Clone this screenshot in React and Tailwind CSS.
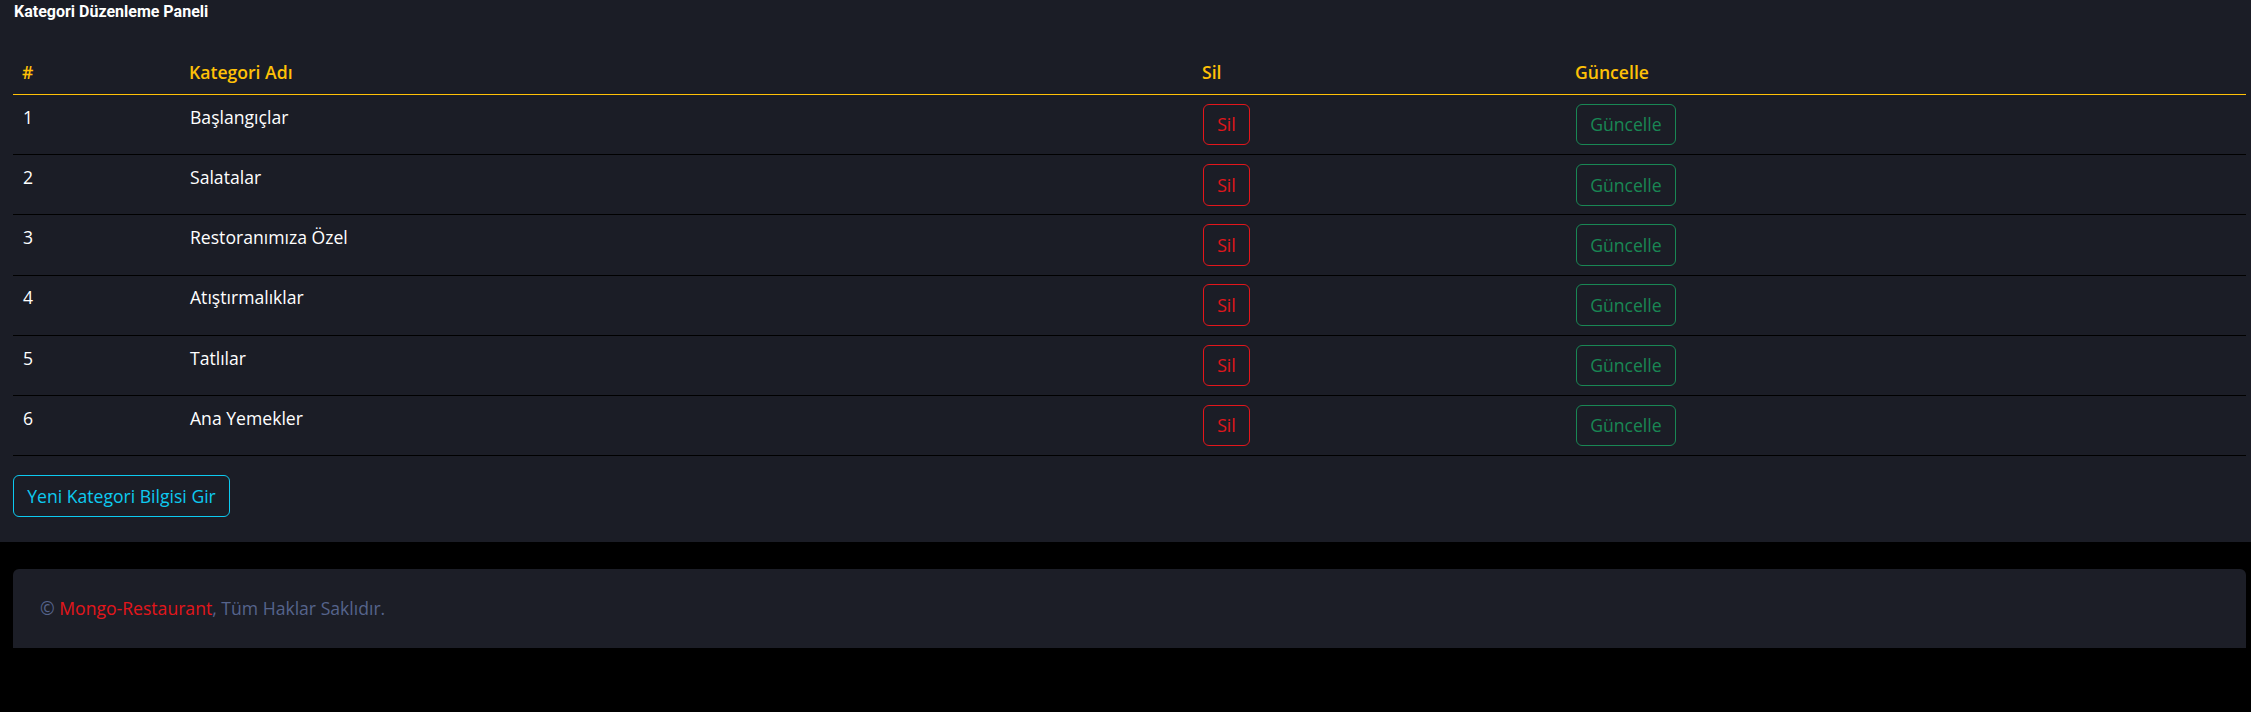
const rows = [
  { id: 1, name: 'Başlangıçlar' },
  { id: 2, name: 'Salatalar' },
  { id: 3, name: 'Restoranımıza Özel' },
  { id: 4, name: 'Atıştırmalıklar' },
  { id: 5, name: 'Tatlılar' },
  { id: 6, name: 'Ana Yemekler' },
];

export default function App() {
  return (
    <div className="min-h-[712px] bg-black font-['Open_Sans',sans-serif]">
      <div className="bg-[#1b1d26] pl-[13px] pr-[5px] pb-[25px]">
        <h1 className="pl-px font-['Roboto',sans-serif] text-[16px] leading-[24px] font-bold text-white">
          Kategori Düzenleme Paneli
        </h1>

        <table className="mt-[26px] w-full table-fixed border-collapse text-[17.6px] leading-[26.4px]">
          <colgroup>
            <col className="w-[167px]" />
            <col className="w-[1013px]" />
            <col className="w-[373px]" />
            <col />
          </colgroup>
          <thead>
            <tr className="border-b border-[#ffc107] text-left text-[#ffc107]">
              <th className="px-[9px] py-[8.8px] font-semibold">#</th>
              <th className="px-[9px] py-[8.8px] font-semibold">Kategori Adı</th>
              <th className="px-[9px] py-[8.8px] font-semibold">Sil</th>
              <th className="px-[9px] py-[8.8px] font-semibold">Güncelle</th>
            </tr>
          </thead>
          <tbody className="text-white">
            {rows.map((row) => (
              <tr key={row.id} className="border-b border-black align-top">
                <td className="px-[10px] py-[8.8px]">{row.id}</td>
                <td className="px-[10px] py-[8.8px]">{row.name}</td>
                <td className="px-[10px] py-[8.8px]">
                  <button className="rounded-[6px] border border-[#e3161b] px-[13.2px] py-[6.6px] text-[17.6px] leading-[26.4px] text-[#e3161b]">
                    Sil
                  </button>
                </td>
                <td className="px-[10px] py-[8.8px]">
                  <button className="rounded-[6px] border border-[#198754] px-[13.2px] py-[6.6px] text-[17.6px] leading-[26.4px] text-[#198754]">
                    Güncelle
                  </button>
                </td>
              </tr>
            ))}
          </tbody>
        </table>

        <button className="mt-[19px] rounded-[6px] border border-[#0dcaf0] px-[13.2px] py-[6.6px] text-[17.6px] leading-[26.4px] text-[#0dcaf0]">
          Yeni Kategori Bilgisi Gir
        </button>
      </div>

      <div className="pl-[13px] pr-[5px] pt-[27px]">
        <div className="flex h-[79px] items-center rounded-t-[6px] bg-[#1c1e27] px-[27px] text-[17.6px] text-[#56648c]">
          <p>
            © <span className="text-[#e3161b]">Mongo-Restaurant</span>, Tüm Haklar Saklıdır.
          </p>
        </div>
      </div>
    </div>
  );
}
